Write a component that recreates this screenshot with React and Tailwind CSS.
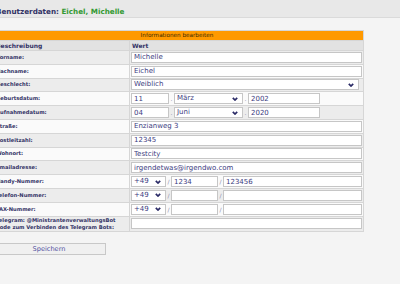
import React from "react";

const Chevron = () => (
  <svg width="6" height="4" viewBox="0 0 6 4" className="shrink-0">
    <path d="M0.8 0.8 L3 3 L5.2 0.8" fill="none" stroke="#2a2a66" strokeWidth="1.7" />
  </svg>
);

function Inp({ cls, value }) {
  return (
    <input
      readOnly
      value={value}
      className={`${cls} h-[11px] bg-white border border-[#c6c6c6] pl-[2px] pr-0 py-0 text-[7px] leading-none text-[#3c3c80] font-['DejaVu_Sans',sans-serif] outline-none`}
    />
  );
}

function Sel({ cls, value }) {
  return (
    <div
      className={`${cls} h-[11px] bg-white border border-[#c6c6c6] pl-[2px] pr-[4px] flex items-center justify-between text-[7px] leading-none text-[#3c3c80]`}
    >
      <span>{value}</span>
      <Chevron />
    </div>
  );
}

const Sep = ({ c, cls }) => (
  <div className={`${cls} text-[6px] text-[#8888aa] flex justify-center`}>{c}</div>
);

function Row({ label, gray, children, tall }) {
  const bg = gray ? "bg-[#ececec]" : "bg-[#fafafa]";
  const h = tall ? "h-[14.4px]" : "h-[12.8px]";
  return (
    <>
      <div className={`${h} ${bg} flex items-center pl-[5px] text-[5.2px] leading-[7px] font-bold text-[#333366] whitespace-nowrap`}>
        {label}
      </div>
      <div className={`${h} ${bg} flex items-center pl-px pr-[1.5px]`}>{children}</div>
    </>
  );
}

export default function App() {
  return (
    <div className="w-[400px] h-[284px] overflow-hidden bg-[#f4f4f4] font-['DejaVu_Sans',sans-serif]">
      <div className="h-[18px] bg-[#e8e8e8] border-b border-[#dadada] flex items-center pt-[6px]">
        <div className="ml-[-4px] text-[7.2px] font-bold whitespace-nowrap leading-none">
          <span className="text-[#333366]">Benutzerdaten: </span>
          <span className="text-[#339933]">Eichel, Michelle</span>
        </div>
      </div>

      <div className="mt-[12px] ml-[-10px] w-[374px] grid grid-cols-[138px_233px] gap-px bg-[#d6d6d6] border border-[#d6d6d6]">
        <div className="col-span-2 h-[9px] bg-[#ff9900] flex items-center justify-center text-[5.7px] leading-none text-[#3d2a00]">
          Informationen bearbeiten
        </div>
        <div className="h-[9px] bg-[#e2e2e2] flex items-center pl-[5px] text-[6px] font-bold text-[#333366]">
          Beschreibung
        </div>
        <div className="h-[9px] bg-[#e2e2e2] flex items-center pl-[2px] text-[6px] font-bold text-[#333366]">
          Wert
        </div>

        <Row label="Vorname:" gray>
          <Inp cls="flex-1 min-w-0" value="Michelle" />
        </Row>
        <Row label="Nachname:">
          <Inp cls="flex-1 min-w-0" value="Eichel" />
        </Row>
        <Row label="Geschlecht:" gray>
          <Sel cls="w-[228px]" value="Weiblich" />
        </Row>
        <Row label="Geburtsdatum:">
          <Inp cls="w-[38px]" value="11" />
          <Sep c="." cls="w-[5px]" />
          <Sel cls="w-[69px]" value="März" />
          <Sep c="." cls="w-[5px]" />
          <Inp cls="w-[72px]" value="2002" />
        </Row>
        <Row label="Aufnahmedatum:" gray>
          <Inp cls="w-[38px]" value="04" />
          <Sep c="." cls="w-[5px]" />
          <Sel cls="w-[69px]" value="Juni" />
          <Sep c="." cls="w-[5px]" />
          <Inp cls="w-[72px]" value="2020" />
        </Row>
        <Row label="Straße:">
          <Inp cls="flex-1 min-w-0" value="Enzianweg 3" />
        </Row>
        <Row label="Postleitzahl:" gray>
          <Inp cls="flex-1 min-w-0" value="12345" />
        </Row>
        <Row label="Wohnort:">
          <Inp cls="flex-1 min-w-0" value="Testcity" />
        </Row>
        <Row label="Emailadresse:" gray>
          <Inp cls="flex-1 min-w-0" value="irgendetwas@irgendwo.com" />
        </Row>
        <Row label="Handy-Nummer:">
          <Sel cls="w-[35px]" value="+49" />
          <Sep c="/" cls="w-[5px]" />
          <Inp cls="w-[47px]" value="1234" />
          <Sep c="/" cls="w-[5px]" />
          <Inp cls="flex-1 min-w-0" value="123456" />
        </Row>
        <Row label="Telefon-Nummer:" gray>
          <Sel cls="w-[35px]" value="+49" />
          <Sep c="/" cls="w-[5px]" />
          <Inp cls="w-[47px]" value="" />
          <Sep c="/" cls="w-[5px]" />
          <Inp cls="flex-1 min-w-0" value="" />
        </Row>
        <Row label="FAX-Nummer:">
          <Sel cls="w-[35px]" value="+49" />
          <Sep c="/" cls="w-[5px]" />
          <Inp cls="w-[47px]" value="" />
          <Sep c="/" cls="w-[5px]" />
          <Inp cls="flex-1 min-w-0" value="" />
        </Row>
        <Row
          tall
          gray
          label={
            <span>
              Telegram: @MinistrantenverwaltungsBot
              <br />
              Code zum Verbinden des Telegram Bots:
            </span>
          }
        >
          <Inp cls="flex-1 min-w-0" value="" />
        </Row>
      </div>

      <div className="mt-[11px] ml-[-8px] w-[114px] h-[12px] bg-[#f0f0f0] border border-[#c8c8c8] flex items-center justify-center text-[6.6px] leading-none text-[#5050a0]">
        Speichern
      </div>
    </div>
  );
}
